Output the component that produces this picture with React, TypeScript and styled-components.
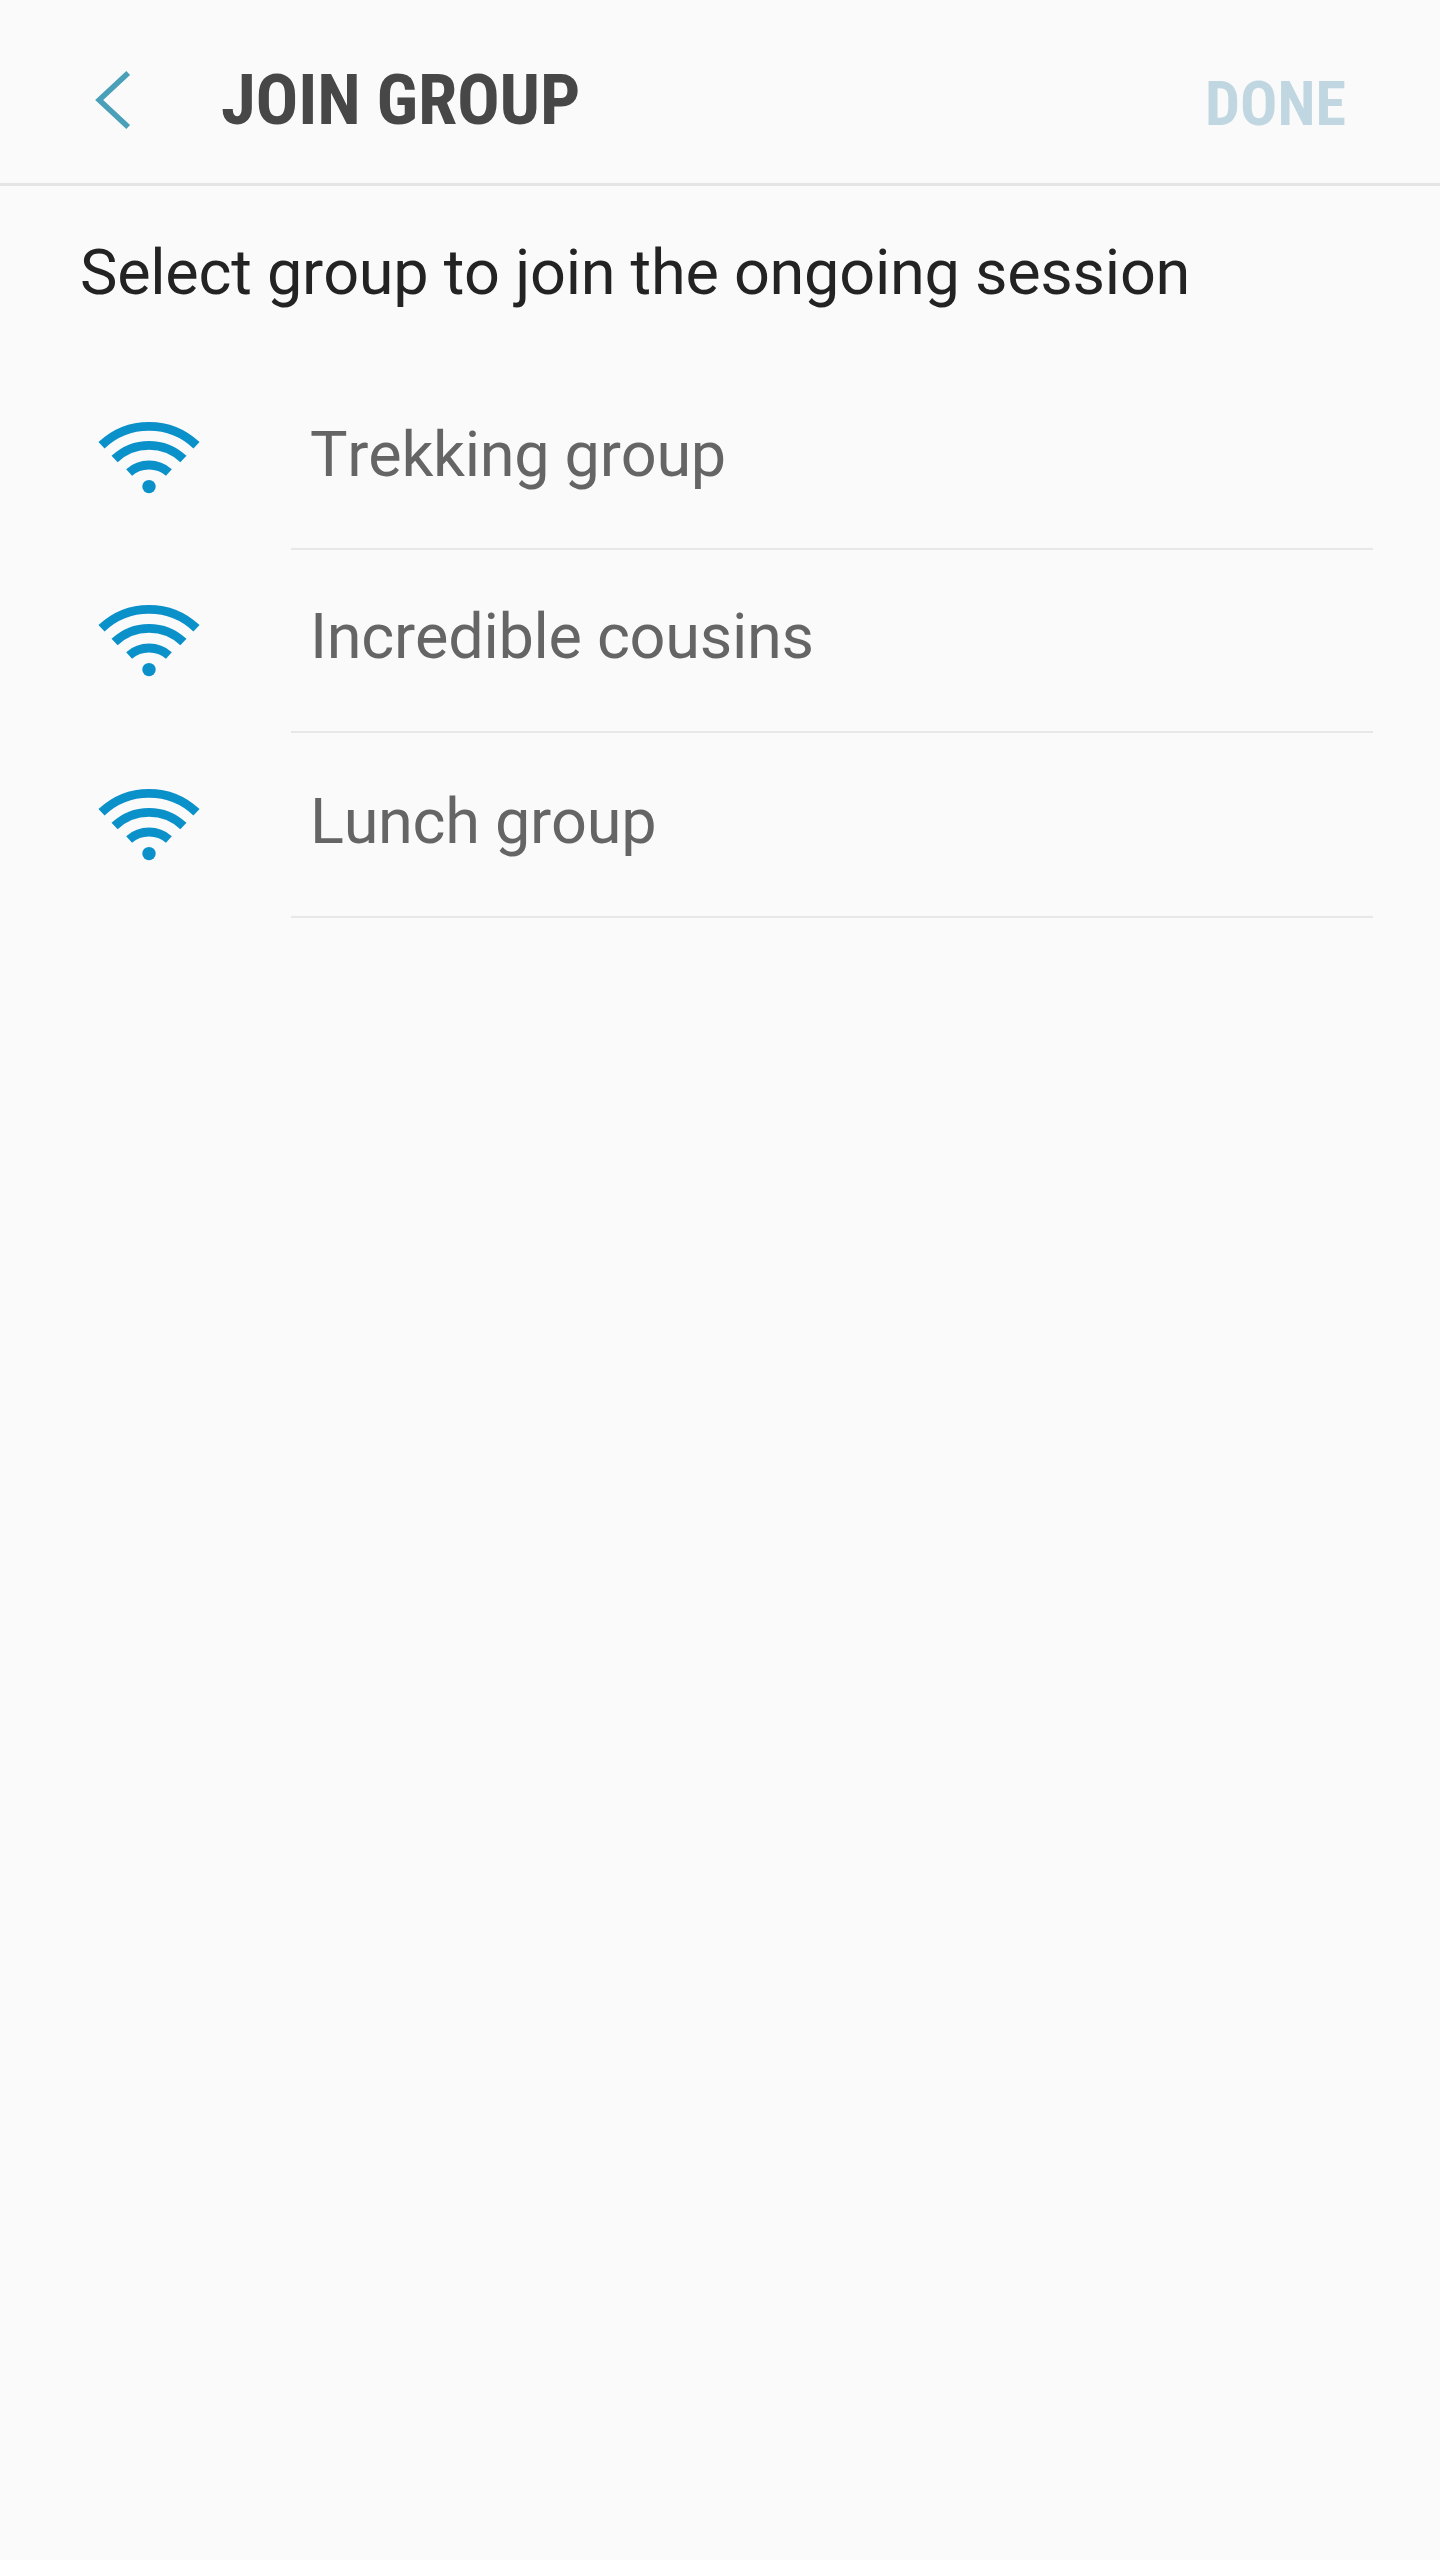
import React from "react";
import styled, { createGlobalStyle } from "styled-components";

const Global = createGlobalStyle`
  body {
    margin: 0;
    background: #fafafa;
    font-family: Roboto, sans-serif;
  }
`;

const Screen = styled.main`
  box-sizing: border-box;
  width: 1440px;
  min-height: 2560px;
  background: #fafafa;
  display: flex;
  flex-direction: column;
`;

const Header = styled.header`
  box-sizing: border-box;
  height: 186px;
  padding: 0 93px;
  border-bottom: 3px solid #e5e5e5;
  display: flex;
  align-items: flex-start;
`;

const Back = styled.button`
  flex: none;
  border: 0;
  background: none;
  padding: 0;
  margin-top: 70px;
  width: 40px;
  height: 60px;

  svg {
    display: block;
  }
`;

const Title = styled.h1`
  flex: 1;
  margin: 58px 0 0 88px;
  font: 700 71px/84px "Roboto Condensed", Roboto, sans-serif;
  font-stretch: 75%;
  letter-spacing: -0.22px;
  color: #474747;
  white-space: nowrap;
`;

const Done = styled.button`
  flex: none;
  width: 142px;
  border: 0;
  background: none;
  padding: 0;
  margin-top: 66px;
  text-align: left;
  font: 700 62px/75px "Roboto Condensed", Roboto, sans-serif;
  font-stretch: 75%;
  color: #c0d7e1;
`;

const Prompt = styled.p`
  margin: 49px 0 0 80px;
  font-size: 63px;
  line-height: 75px;
  font-kerning: none;
  letter-spacing: -0.26px;
  color: #232323;
  white-space: nowrap;
`;

const List = styled.ul`
  list-style: none;
  margin: 56px 0 0;
  padding: 0 67px 0 98px;
`;

const Row = styled.li<{ $height: number }>`
  height: ${(p) => p.$height}px;
  display: flex;
`;

const Signal = styled.svg<{ $top: number }>`
  flex: none;
  width: 103px;
  height: 76px;
  margin-top: ${(p) => p.$top}px;
`;

const Name = styled.span<{ $top: number }>`
  flex: 1;
  margin-left: 90px;
  padding: ${(p) => p.$top}px 0 0 19px;
  border-bottom: 2px solid #e7e7e7;
  font-size: 63px;
  line-height: 75px;
  font-kerning: none;
  letter-spacing: -0.3px;
  color: #656565;
`;

const groups = [
  { name: "Trekking group", height: 184, iconTop: 55, textTop: 51 },
  { name: "Incredible cousins", height: 183, iconTop: 54, textTop: 49 },
  { name: "Lunch group", height: 185, iconTop: 55, textTop: 51 },
];

export default function App() {
  return (
    <Screen>
      <Global />
      <Header>
        <Back aria-label="Back">
          <svg width="40" height="60" viewBox="0 0 40 60" fill="none" stroke="#4a9fb9" strokeWidth="5.5">
            <path d="M35.2 3 6.2 30 35.2 57" />
          </svg>
        </Back>
        <Title>JOIN GROUP</Title>
        <Done>DONE</Done>
      </Header>
      <Prompt>Select group to join the ongoing session</Prompt>
      <List>
        {groups.map((g) => (
          <Row key={g.name} $height={g.height}>
            <Signal $top={g.iconTop} viewBox="0 0 103 76" fill="none" stroke="#0b91ca" strokeWidth="8.9">
              <path d="M3.5 24.3A69 69 0 0 1 98.5 24.3" />
              <path d="M16.6 38.1A50 50 0 0 1 85.4 38.1" />
              <path d="M31.1 51.5A30.3 30.3 0 0 1 70.9 51.5" />
              <circle cx="51" cy="65.6" r="6.7" fill="#0b91ca" stroke="none" />
            </Signal>
            <Name $top={g.textTop}>{g.name}</Name>
          </Row>
        ))}
      </List>
    </Screen>
  );
}
